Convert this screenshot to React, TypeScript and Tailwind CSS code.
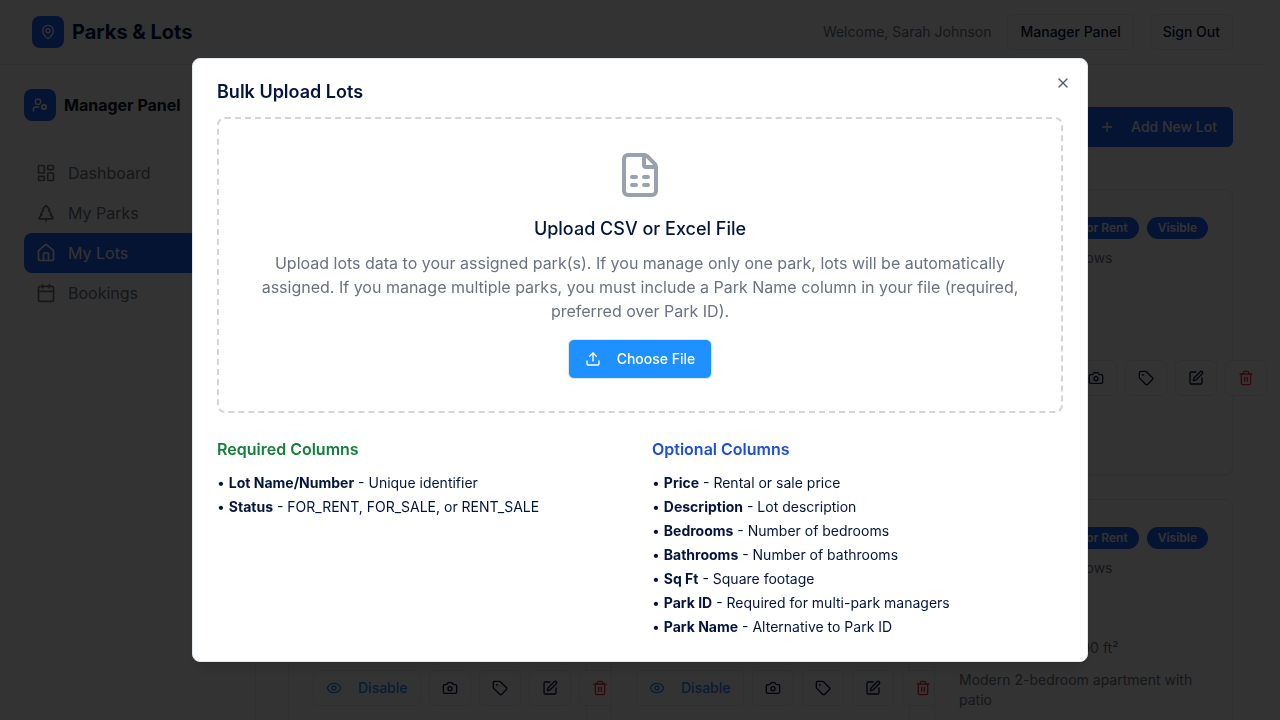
import type { ReactNode } from "react";
import {
  Calendar,
  Camera,
  Eye,
  FileSpreadsheet,
  House,
  LayoutDashboard,
  MapPin,
  Plus,
  SquarePen,
  Tag,
  Trash2,
  TreePine,
  Upload,
  UserCog,
  X,
} from "lucide-react";

const navItems = [
  { label: "Dashboard", icon: LayoutDashboard, active: false },
  { label: "My Parks", icon: TreePine, active: false },
  { label: "My Lots", icon: House, active: true },
  { label: "Bookings", icon: Calendar, active: false },
];

const lots = [
  { name: "Lot A1", details: "", description: "" },
  { name: "Lot A2", details: "", description: "" },
  { name: "Lot A3", details: "", description: "" },
  { name: "Lot B1", details: "", description: "" },
  { name: "Lot B2", details: "", description: "" },
  {
    name: "Lot B3",
    details: "2 bed · 2 bath · 1,400 ft²",
    description: "Modern 2-bedroom apartment with patio",
  },
];

const requiredColumns = [
  ["Lot Name/Number", "Unique identifier"],
  ["Status", "FOR_RENT, FOR_SALE, or RENT_SALE"],
];

const optionalColumns = [
  ["Price", "Rental or sale price"],
  ["Description", "Lot description"],
  ["Bedrooms", "Number of bedrooms"],
  ["Bathrooms", "Number of bathrooms"],
  ["Sq Ft", "Square footage"],
  ["Park ID", "Required for multi-park managers"],
  ["Park Name", "Alternative to Park ID"],
];

function OutlineButton({ children, label }: { children: ReactNode; label?: string }) {
  return (
    <button
      type="button"
      aria-label={label}
      className="inline-flex h-9 shrink-0 items-center justify-center rounded-md border border-slate-200 bg-white px-3 text-sm font-medium"
    >
      {children}
    </button>
  );
}

function Badge({ children }: { children: ReactNode }) {
  return (
    <span className="shrink-0 rounded-full border border-transparent bg-[#1e66ff] px-2.5 py-0.5 text-xs font-semibold text-slate-50">
      {children}
    </span>
  );
}

function LotCard({ name, details, description }: { name: string; details: string; description: string }) {
  return (
    <article className="relative min-h-[286px] min-w-0 rounded-lg border border-slate-200 bg-white shadow-xs">
      <div className="flex flex-col gap-1.5 p-6">
        <div className="flex h-7 items-center justify-between">
          <h3 className="text-lg font-semibold">{name}</h3>
          <div className="flex gap-2">
            <Badge>For Rent</Badge>
            <Badge>Visible</Badge>
          </div>
        </div>
        <p className="text-sm text-gray-500">Hillview Park Meadows</p>
      </div>
      <div className="px-6 pb-6">
        <p className="mb-2 h-7 text-lg font-bold">$1,200</p>
        <p className="mb-3 h-5 text-sm text-gray-500">{details}</p>
        {description && <p className="mb-3 text-sm text-gray-500">{description}</p>}
        <div className="flex gap-2">
          <OutlineButton>
            <Eye size={16} className="mr-4 text-[#1e90ff]" />
            <span className="text-[#1e90ff]">Disable</span>
          </OutlineButton>
          <OutlineButton label="Photos">
            <Camera size={16} />
          </OutlineButton>
          <OutlineButton label="Special price">
            <Tag size={16} />
          </OutlineButton>
          <OutlineButton label="Edit">
            <SquarePen size={16} />
          </OutlineButton>
          <OutlineButton label="Delete">
            <Trash2 size={16} className="text-red-500" />
          </OutlineButton>
        </div>
      </div>
    </article>
  );
}

function ColumnList({ title, tone, items }: { title: string; tone: string; items: string[][] }) {
  return (
    <section>
      <h4 className={`mb-3 font-semibold ${tone}`}>{title}</h4>
      <ul className="space-y-1 text-sm">
        {items.map(([name, note]) => (
          <li key={name}>
            • <strong className="font-bold">{name}</strong> - {note}
          </li>
        ))}
      </ul>
    </section>
  );
}

function UploadDialog() {
  return (
    <div className="fixed inset-0 z-10 flex items-center justify-center bg-black/80">
      <div
        role="dialog"
        aria-modal="true"
        aria-labelledby="upload-title"
        className="relative flex w-full max-w-4xl flex-col gap-4 rounded-lg border border-slate-200 bg-white p-6 shadow-lg"
      >
        <h2 id="upload-title" className="text-lg leading-none font-semibold">
          Bulk Upload Lots
        </h2>
        <button type="button" aria-label="Close" className="absolute top-4 right-4 opacity-70">
          <X size={16} />
        </button>
        <div className="flex flex-col gap-6">
          <div className="flex flex-col items-center rounded-lg border-2 border-dashed border-gray-300 p-8 text-center">
            <FileSpreadsheet size={48} className="mb-4 text-gray-400" />
            <h3 className="mb-2 text-lg font-medium">Upload CSV or Excel File</h3>
            <p className="mb-4 text-gray-500">
              Upload lots data to your assigned park(s). If you manage only one park, lots will be automatically
              assigned. If you manage multiple parks, you must include a Park Name column in your file (required,
              preferred over Park ID).
            </p>
            <button
              type="button"
              className="flex h-10 items-center gap-4 rounded-md border border-slate-200 bg-[#1e90ff] px-4 text-sm font-medium text-white"
            >
              <Upload size={16} />
              Choose File
            </button>
          </div>
          <div className="grid grid-cols-2 gap-6">
            <ColumnList title="Required Columns" tone="text-[#15803d]" items={requiredColumns} />
            <ColumnList title="Optional Columns" tone="text-[#1d4ed8]" items={optionalColumns} />
          </div>
        </div>
      </div>
    </div>
  );
}

export default function App() {
  return (
    <div className="h-screen overflow-hidden bg-white pr-[15px] font-[Inter,sans-serif] text-[#03143d]">
      <header className="flex h-[65px] items-center justify-between border-b border-slate-200 px-8">
        <a href="#" className="flex items-center gap-2">
          <span className="flex size-8 items-center justify-center rounded-lg bg-[#1e66ff] text-white">
            <MapPin size={16} />
          </span>
          <span className="text-xl font-bold">Parks &amp; Lots</span>
        </a>
        <div className="flex items-center gap-4">
          <span className="text-sm text-gray-500">Welcome, Sarah Johnson</span>
          <OutlineButton>Manager Panel</OutlineButton>
          <OutlineButton>Sign Out</OutlineButton>
        </div>
      </header>
      <div className="flex">
        <aside className="h-screen w-64 shrink-0 border-r border-slate-200 p-6">
          <div className="mb-8 flex items-center gap-2">
            <span className="flex size-8 items-center justify-center rounded-lg bg-[#1e66ff] text-white">
              <UserCog size={16} />
            </span>
            <span className="font-bold text-gray-900">Manager Panel</span>
          </div>
          <nav>
            {navItems.map(({ label, icon: Icon, active }) => (
              <a
                key={label}
                href="#"
                className={
                  active
                    ? "flex items-center gap-3 rounded-lg bg-[#1e66ff] px-3 py-2 text-white"
                    : "flex items-center gap-3 rounded-lg px-3 py-2 text-gray-500"
                }
              >
                <Icon size={20} />
                {label}
              </a>
            ))}
          </nav>
        </aside>
        <main className="min-w-0 flex-1 p-8">
          <div className="mb-8 flex h-[60px] items-center justify-between">
            <h1 className="text-3xl font-bold">My Lots</h1>
            <button
              type="button"
              className="flex h-10 items-center gap-4 rounded-md bg-[#1e66ff] px-4 text-sm font-medium text-slate-50"
            >
              <Plus size={16} />
              Add New Lot
            </button>
          </div>
          <div className="grid grid-cols-3 gap-6">
            {lots.map((lot) => (
              <LotCard key={lot.name} {...lot} />
            ))}
          </div>
        </main>
      </div>
      <UploadDialog />
    </div>
  );
}
